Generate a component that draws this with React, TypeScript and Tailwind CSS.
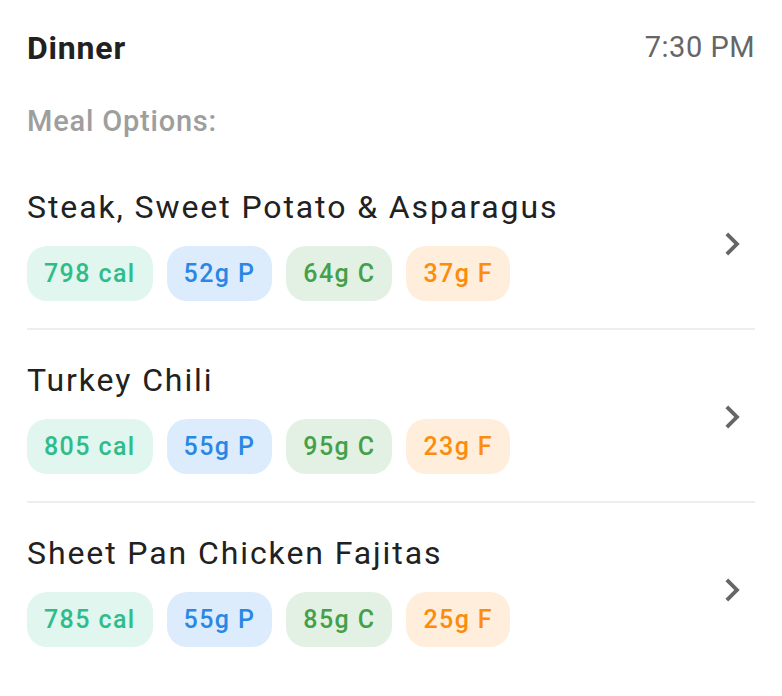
const meals = [
  { name: "Steak, Sweet Potato & Asparagus", cal: 798, p: 52, c: 64, f: 37 },
  { name: "Turkey Chili", cal: 805, p: 55, c: 95, f: 23 },
  { name: "Sheet Pan Chicken Fajitas", cal: 785, p: 55, c: 85, f: 25 },
]

function Pill({ label, className }: { label: string; className: string }) {
  return (
    <span className={`h-[55px] px-[17px] rounded-[20px] flex items-center text-[25px] font-medium tracking-[1.4px] ${className}`}>
      {label}
    </span>
  )
}

function Chevron() {
  return (
    <svg width="46" height="46" viewBox="0 0 24 24" fill="#666666">
      <path d="M10 6L8.59 7.41 13.17 12l-4.58 4.59L10 18l6-6z" />
    </svg>
  )
}

export default function App() {
  return (
    <div className="w-[782px] h-[696px] bg-white px-[27px] pt-[29px]" style={{ fontFamily: "Roboto, 'Liberation Sans', sans-serif" }}>
      <div className="flex items-center justify-between h-[37px]">
        <h1 className="text-[32px] font-bold text-[#212121] tracking-[0.8px]">Dinner</h1>
        <span className="text-[29px] text-[#666666] tracking-[0.5px]">7:30 PM</span>
      </div>

      <p className="mt-[39px] text-[29px] leading-[32px] font-medium text-[#9e9e9e] tracking-[0.8px]">Meal Options:</p>

      <div className="mt-[20px]">
        {meals.map((m, i) => (
          <div
            key={m.name}
            className={`flex items-center pt-[30px] pb-[27px] ${i < meals.length - 1 ? "border-b-2 border-[#eeeeee]" : ""}`}
          >
            <div className="flex-1">
              <div className="text-[32px] leading-[40px] text-[#212121] tracking-[1.9px]">{m.name}</div>
              <div className="mt-[19px] flex gap-[14px]">
                <Pill label={`${m.cal} cal`} className="bg-[#e0f6ee] text-[#2ebd8a]" />
                <Pill label={`${m.p}g P`} className="bg-[#ddecfc] text-[#2a88e4]" />
                <Pill label={`${m.c}g C`} className="bg-[#e3f1e4] text-[#45a04a]" />
                <Pill label={`${m.f}g F`} className="bg-[#ffeedc] text-[#fb8c0c]" />
              </div>
            </div>
            <Chevron />
          </div>
        ))}
      </div>
    </div>
  )
}
